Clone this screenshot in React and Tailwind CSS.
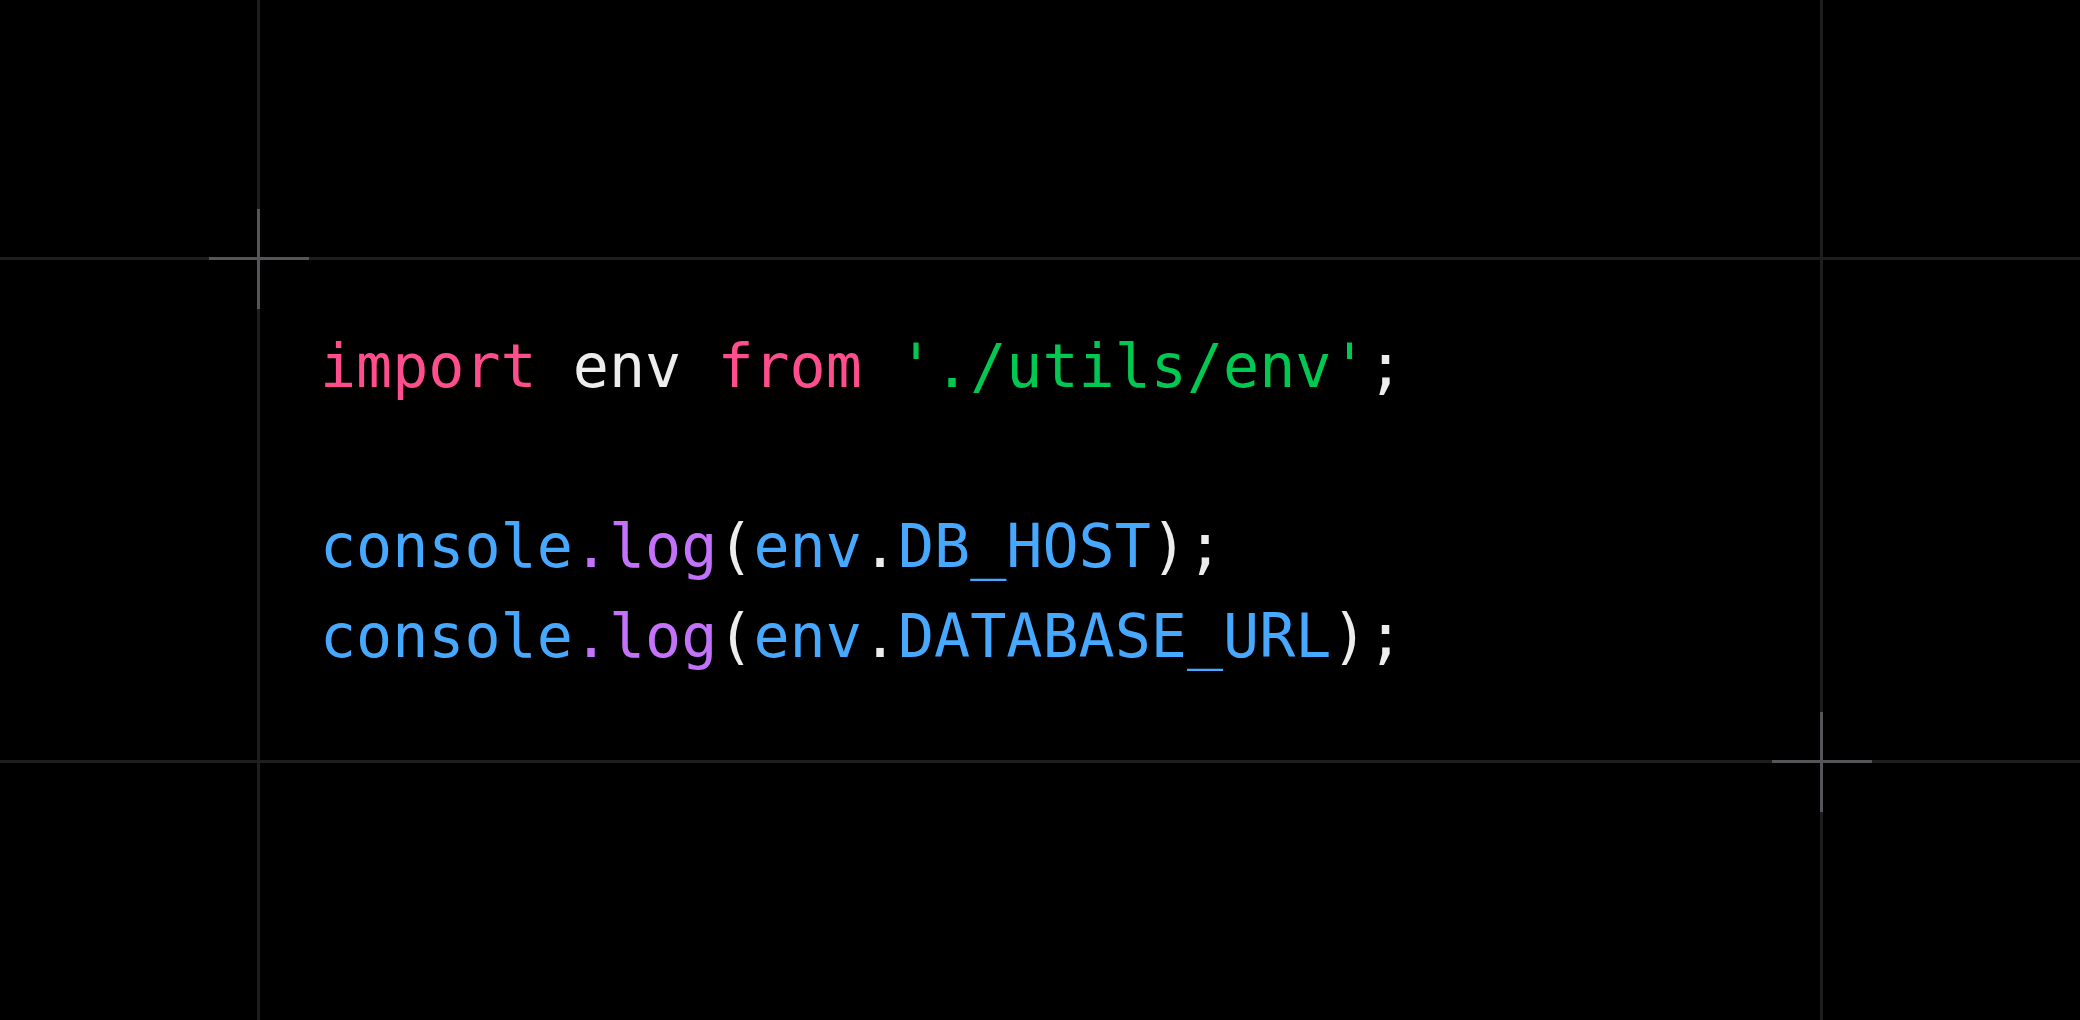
const mono = { fontFamily: '"DejaVu Sans Mono", "Liberation Mono", monospace' };

const Cross = () => (
    <div className="relative h-[3px] w-[3px]">
        <div className="absolute left-[-48px] top-0 h-[3px] w-[100px] bg-[#56565a]" />
        <div className="absolute top-[-48px] left-0 w-[3px] h-[100px] bg-[#56565a]" />
    </div>
);

const App = () => {
    return (
        <div className="h-[1020px] w-full bg-black overflow-hidden grid grid-cols-[257px_3px_1fr_3px_257px] grid-rows-[257px_3px_1fr_3px_257px]">
            {/* row 1 */}
            <div />
            <div className="bg-[#1e1e1e]" />
            <div />
            <div className="bg-[#1e1e1e]" />
            <div />

            {/* top line */}
            <div className="bg-[#1e1e1e]" />
            <div className="bg-[#1e1e1e] z-10"><Cross /></div>
            <div className="bg-[#1e1e1e]" />
            <div className="bg-[#1e1e1e]" />
            <div className="bg-[#1e1e1e]" />

            {/* code row */}
            <div />
            <div className="bg-[#1e1e1e]" />
            <div className="pt-[61px] pl-[60px]">
                <pre className="text-[60px] leading-[90px] text-[#ededed]" style={mono}>
                    <div>
                        <span className="text-[#ff4d8d]">import</span> env{' '}
                        <span className="text-[#ff4d8d]">from</span>{' '}
                        <span className="text-[#00c850]">'./utils/env'</span>;
                    </div>
                    <div>&nbsp;</div>
                    <div>
                        <span className="text-[#47a8ff]">console</span>
                        <span className="text-[#c472fb]">.log</span>(
                        <span className="text-[#47a8ff]">env</span>.
                        <span className="text-[#47a8ff]">DB_HOST</span>);
                    </div>
                    <div>
                        <span className="text-[#47a8ff]">console</span>
                        <span className="text-[#c472fb]">.log</span>(
                        <span className="text-[#47a8ff]">env</span>.
                        <span className="text-[#47a8ff]">DATABASE_URL</span>);
                    </div>
                </pre>
            </div>
            <div className="bg-[#1e1e1e]" />
            <div />

            {/* bottom line */}
            <div className="bg-[#1e1e1e]" />
            <div className="bg-[#1e1e1e]" />
            <div className="bg-[#1e1e1e]" />
            <div className="bg-[#1e1e1e] z-10"><Cross /></div>
            <div className="bg-[#1e1e1e]" />

            {/* row 5 */}
            <div />
            <div className="bg-[#1e1e1e]" />
            <div />
            <div className="bg-[#1e1e1e]" />
            <div />
        </div>
    );
};

export default App;
